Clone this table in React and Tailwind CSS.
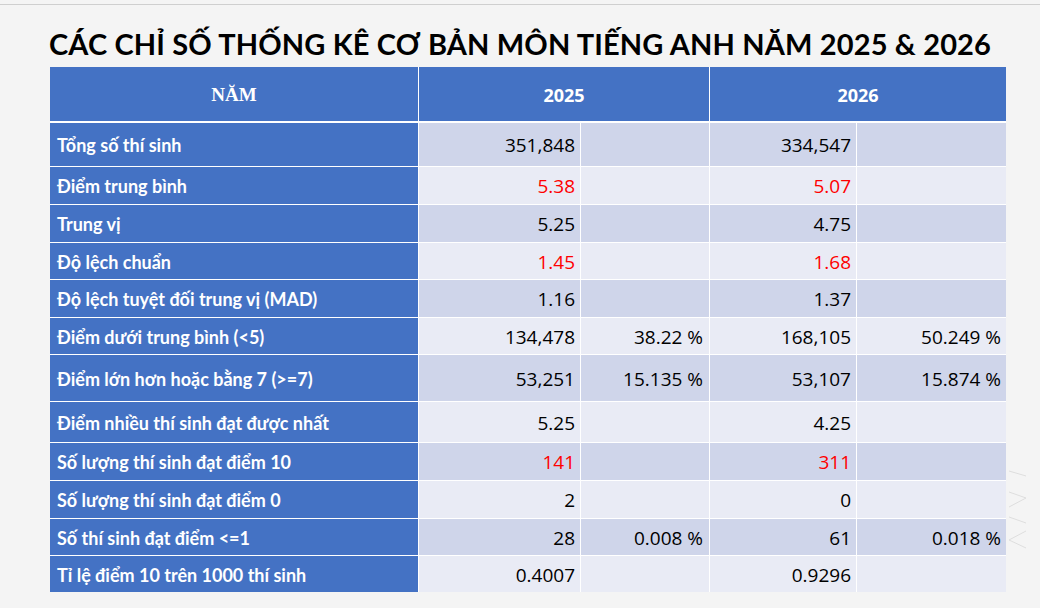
import React from "react";

const rows = [
  { label: "Tổng số thí sinh", a: "351,848", ap: "", b: "334,547", bp: "", h: "h-[43px]" },
  { label: "Điểm trung bình", a: "5.38", ap: "", b: "5.07", bp: "", red: true, h: "h-[37px]" },
  { label: "Trung vị", a: "5.25", ap: "", b: "4.75", bp: "", h: "h-[37px]" },
  { label: "Độ lệch chuẩn", a: "1.45", ap: "", b: "1.68", bp: "", red: true, h: "h-[36px]" },
  { label: "Độ lệch tuyệt đối trung vị (MAD)", a: "1.16", ap: "", b: "1.37", bp: "", h: "h-[37px]" },
  { label: "Điểm dưới trung bình (<5)", a: "134,478", ap: "38.22 %", b: "168,105", bp: "50.249 %", h: "h-[36px]" },
  { label: "Điểm lớn hơn hoặc bằng 7 (>=7)", a: "53,251", ap: "15.135 %", b: "53,107", bp: "15.874 %", h: "h-[46px]" },
  { label: "Điểm nhiều thí sinh đạt được nhất", a: "5.25", ap: "", b: "4.25", bp: "", h: "h-[40px]" },
  { label: "Số lượng thí sinh đạt điểm 10", a: "141", ap: "", b: "311", bp: "", red: true, h: "h-[37px]" },
  { label: "Số lượng thí sinh đạt điểm 0", a: "2", ap: "", b: "0", bp: "", h: "h-[37px]" },
  { label: "Số thí sinh đạt điểm <=1", a: "28", ap: "0.008 %", b: "61", bp: "0.018 %", h: "h-[36px]" },
  { label: "Tỉ lệ điểm 10 trên 1000 thí sinh", a: "0.4007", ap: "", b: "0.9296", bp: "", h: "h-[36px]" },
];

export default function App() {
  return (
    <div className="relative w-[1040px] h-[608px] bg-[#f4f4f4] overflow-hidden">
      <div className="mt-[4px] h-px bg-[#cfcfcf]" />
      <h1 className="mt-[19px] h-[40px] text-center text-[29px] leading-[40px] font-bold tracking-[0.15px] text-black font-['Lato','Open_Sans',sans-serif]">
        CÁC CHỈ SỐ THỐNG KÊ CƠ BẢN MÔN TIẾNG ANH NĂM 2025 &amp; 2026
      </h1>
      <div className="ml-[50px] mt-[3px] w-[956px] bg-white grid grid-cols-[368px_161px_128px_146px_149px] gap-x-px">
        <div className="h-[54px] pt-[3px] bg-[#4472c4] flex items-center justify-center text-white font-bold text-[19px] font-['Liberation_Serif',serif]">
          NĂM
        </div>
        <div className="col-span-2 h-[54px] pt-[2px] bg-[#4472c4] flex items-center justify-center text-white font-bold text-[18px] font-['Open_Sans','Noto_Sans',sans-serif]">
          2025
        </div>
        <div className="col-span-2 h-[54px] pt-[2px] bg-[#4472c4] flex items-center justify-center text-white font-bold text-[18px] font-['Open_Sans','Noto_Sans',sans-serif]">
          2026
        </div>
        <div className="col-span-5 h-[2px]" />
        {rows.map((r, i) => {
          const bg = i % 2 === 0 ? "bg-[#cfd5ea]" : "bg-[#e9ebf5]";
          const valColor = r.red ? "text-[#ff0000]" : "text-black";
          const gap = i < rows.length - 1 ? "mb-px" : "";
          return (
            <React.Fragment key={i}>
              <div className={`${r.h} ${gap} bg-[#4472c4] flex items-center pl-[7px] pt-[2px] text-white font-bold text-[18px] font-['Lato','Open_Sans',sans-serif]`}>
                {r.label}
              </div>
              <div className={`${r.h} ${gap} ${bg} flex items-center justify-end pr-[5px] pt-[2px] text-[19px] font-['Open_Sans','Noto_Sans',sans-serif] ${valColor}`}>
                {r.a}
              </div>
              <div className={`${r.h} ${gap} ${bg} flex items-center justify-end pr-[6px] pt-[2px] text-[19px] font-['Open_Sans','Noto_Sans',sans-serif] text-black`}>
                {r.ap}
              </div>
              <div className={`${r.h} ${gap} ${bg} flex items-center justify-end pr-[5px] pt-[2px] text-[19px] font-['Open_Sans','Noto_Sans',sans-serif] ${valColor}`}>
                {r.b}
              </div>
              <div className={`${r.h} ${gap} ${bg} flex items-center justify-end pr-[5px] pt-[2px] text-[19px] font-['Open_Sans','Noto_Sans',sans-serif] text-black`}>
                {r.bp}
              </div>
            </React.Fragment>
          );
        })}
      </div>
      <svg
        className="absolute left-[1008px] top-[468px]"
        width="20"
        height="84"
        viewBox="0 0 20 84"
        fill="none"
        stroke="#dedede"
        strokeWidth="1"
      >
        <path d="M1 3 L18 8" />
        <path d="M1 24 L18 30 L1 39" />
        <path d="M1 49 L18 55" />
        <path d="M18 63 L1 72 L18 80" />
      </svg>
    </div>
  );
}
